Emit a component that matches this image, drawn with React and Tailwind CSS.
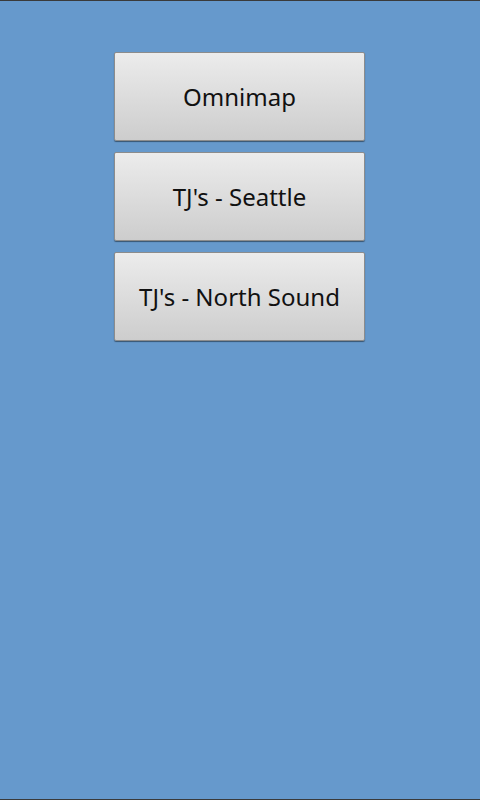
import React from "react";

const items = ["Omnimap", "TJ's - Seattle", "TJ's - North Sound"];

const App = () => {
  return (
    <div className="w-[480px] h-[800px] bg-[#6699cc] border-t border-b border-[#3a3a3a] flex flex-col items-center pt-[51px] pr-[1px] gap-[11px]" style={{ fontFamily: '"Noto Sans", "Open Sans", sans-serif' }}>
      {items.map((label) => (
        <button
          key={label}
          className="w-[251px] h-[89px] rounded-[2px] border border-[#8c8c8c] bg-gradient-to-b from-[#ececec] to-[#cdcdcd] shadow-[0_1px_1px_rgba(0,0,0,0.45)] text-[24px] text-[#111] flex items-center justify-center"
        >
          {label}
        </button>
      ))}
    </div>
  );
};

export default App;
